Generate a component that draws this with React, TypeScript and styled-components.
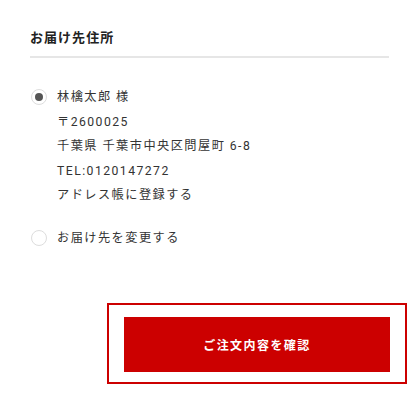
import React from "react";
import styled, { createGlobalStyle } from "styled-components";

const GlobalStyle = createGlobalStyle`
  body {
    margin: 0;
    background: #fff;
    font-family: Roboto, "Noto Sans CJK JP", sans-serif;
    color: #333;
  }
`;

const Section = styled.section`
  padding: 28px 31px 0 30px;
`;

const Title = styled.h2`
  margin: 0;
  padding-bottom: 8px;
  font-size: 13px;
  line-height: 20px;
  font-weight: 700;
  letter-spacing: 0.08em;
  color: #222;
  border-bottom: 2px solid #e6e6e6;
`;

const Options = styled.div`
  display: flex;
  flex-direction: column;
  gap: 18px;
  padding: 27px 0 0 1px;
`;

const Option = styled.label`
  display: flex;
  align-items: flex-start;
  gap: 10px;
  cursor: pointer;
`;

const Radio = styled.span<{ $checked?: boolean }>`
  flex: none;
  position: relative;
  width: 16px;
  height: 16px;
  margin-top: 4px;
  border: 1px solid #ddd;
  border-radius: 50%;
  box-sizing: border-box;

  &::after {
    content: "";
    display: ${(p) => (p.$checked ? "block" : "none")};
    position: absolute;
    top: 3px;
    left: 3px;
    width: 8px;
    height: 8px;
    border-radius: 50%;
    background: #555;
  }
`;

const Lines = styled.div`
  display: flex;
  flex-direction: column;
  font-size: 12.2px;
  line-height: 24.5px;
  letter-spacing: 0.12em;
`;

const Footer = styled.div`
  display: flex;
  justify-content: flex-end;
  padding: 53px 13px 0 0;
`;

const Focus = styled.div`
  border: 2px solid #c00;
  padding: 12px 15px 10px;
`;

const Submit = styled.button`
  display: block;
  width: 266px;
  height: 55px;
  border: none;
  background: #c00;
  color: #fff;
  font-family: inherit;
  font-size: 12px;
  font-weight: 700;
  letter-spacing: 0.12em;
  cursor: pointer;
`;

const App = (): JSX.Element => {
  return (
    <>
      <GlobalStyle />
      <Section>
        <Title>お届け先住所</Title>
        <Options>
          <Option>
            <Radio $checked />
            <Lines>
              <span>林檎太郎 様</span>
              <span>〒2600025</span>
              <span>千葉県 千葉市中央区問屋町 6-8</span>
              <span>TEL:0120147272</span>
              <span>アドレス帳に登録する</span>
            </Lines>
          </Option>
          <Option>
            <Radio />
            <Lines>
              <span>お届け先を変更する</span>
            </Lines>
          </Option>
        </Options>
      </Section>
      <Footer>
        <Focus>
          <Submit type="button">ご注文内容を確認</Submit>
        </Focus>
      </Footer>
    </>
  );
};

export default App;
